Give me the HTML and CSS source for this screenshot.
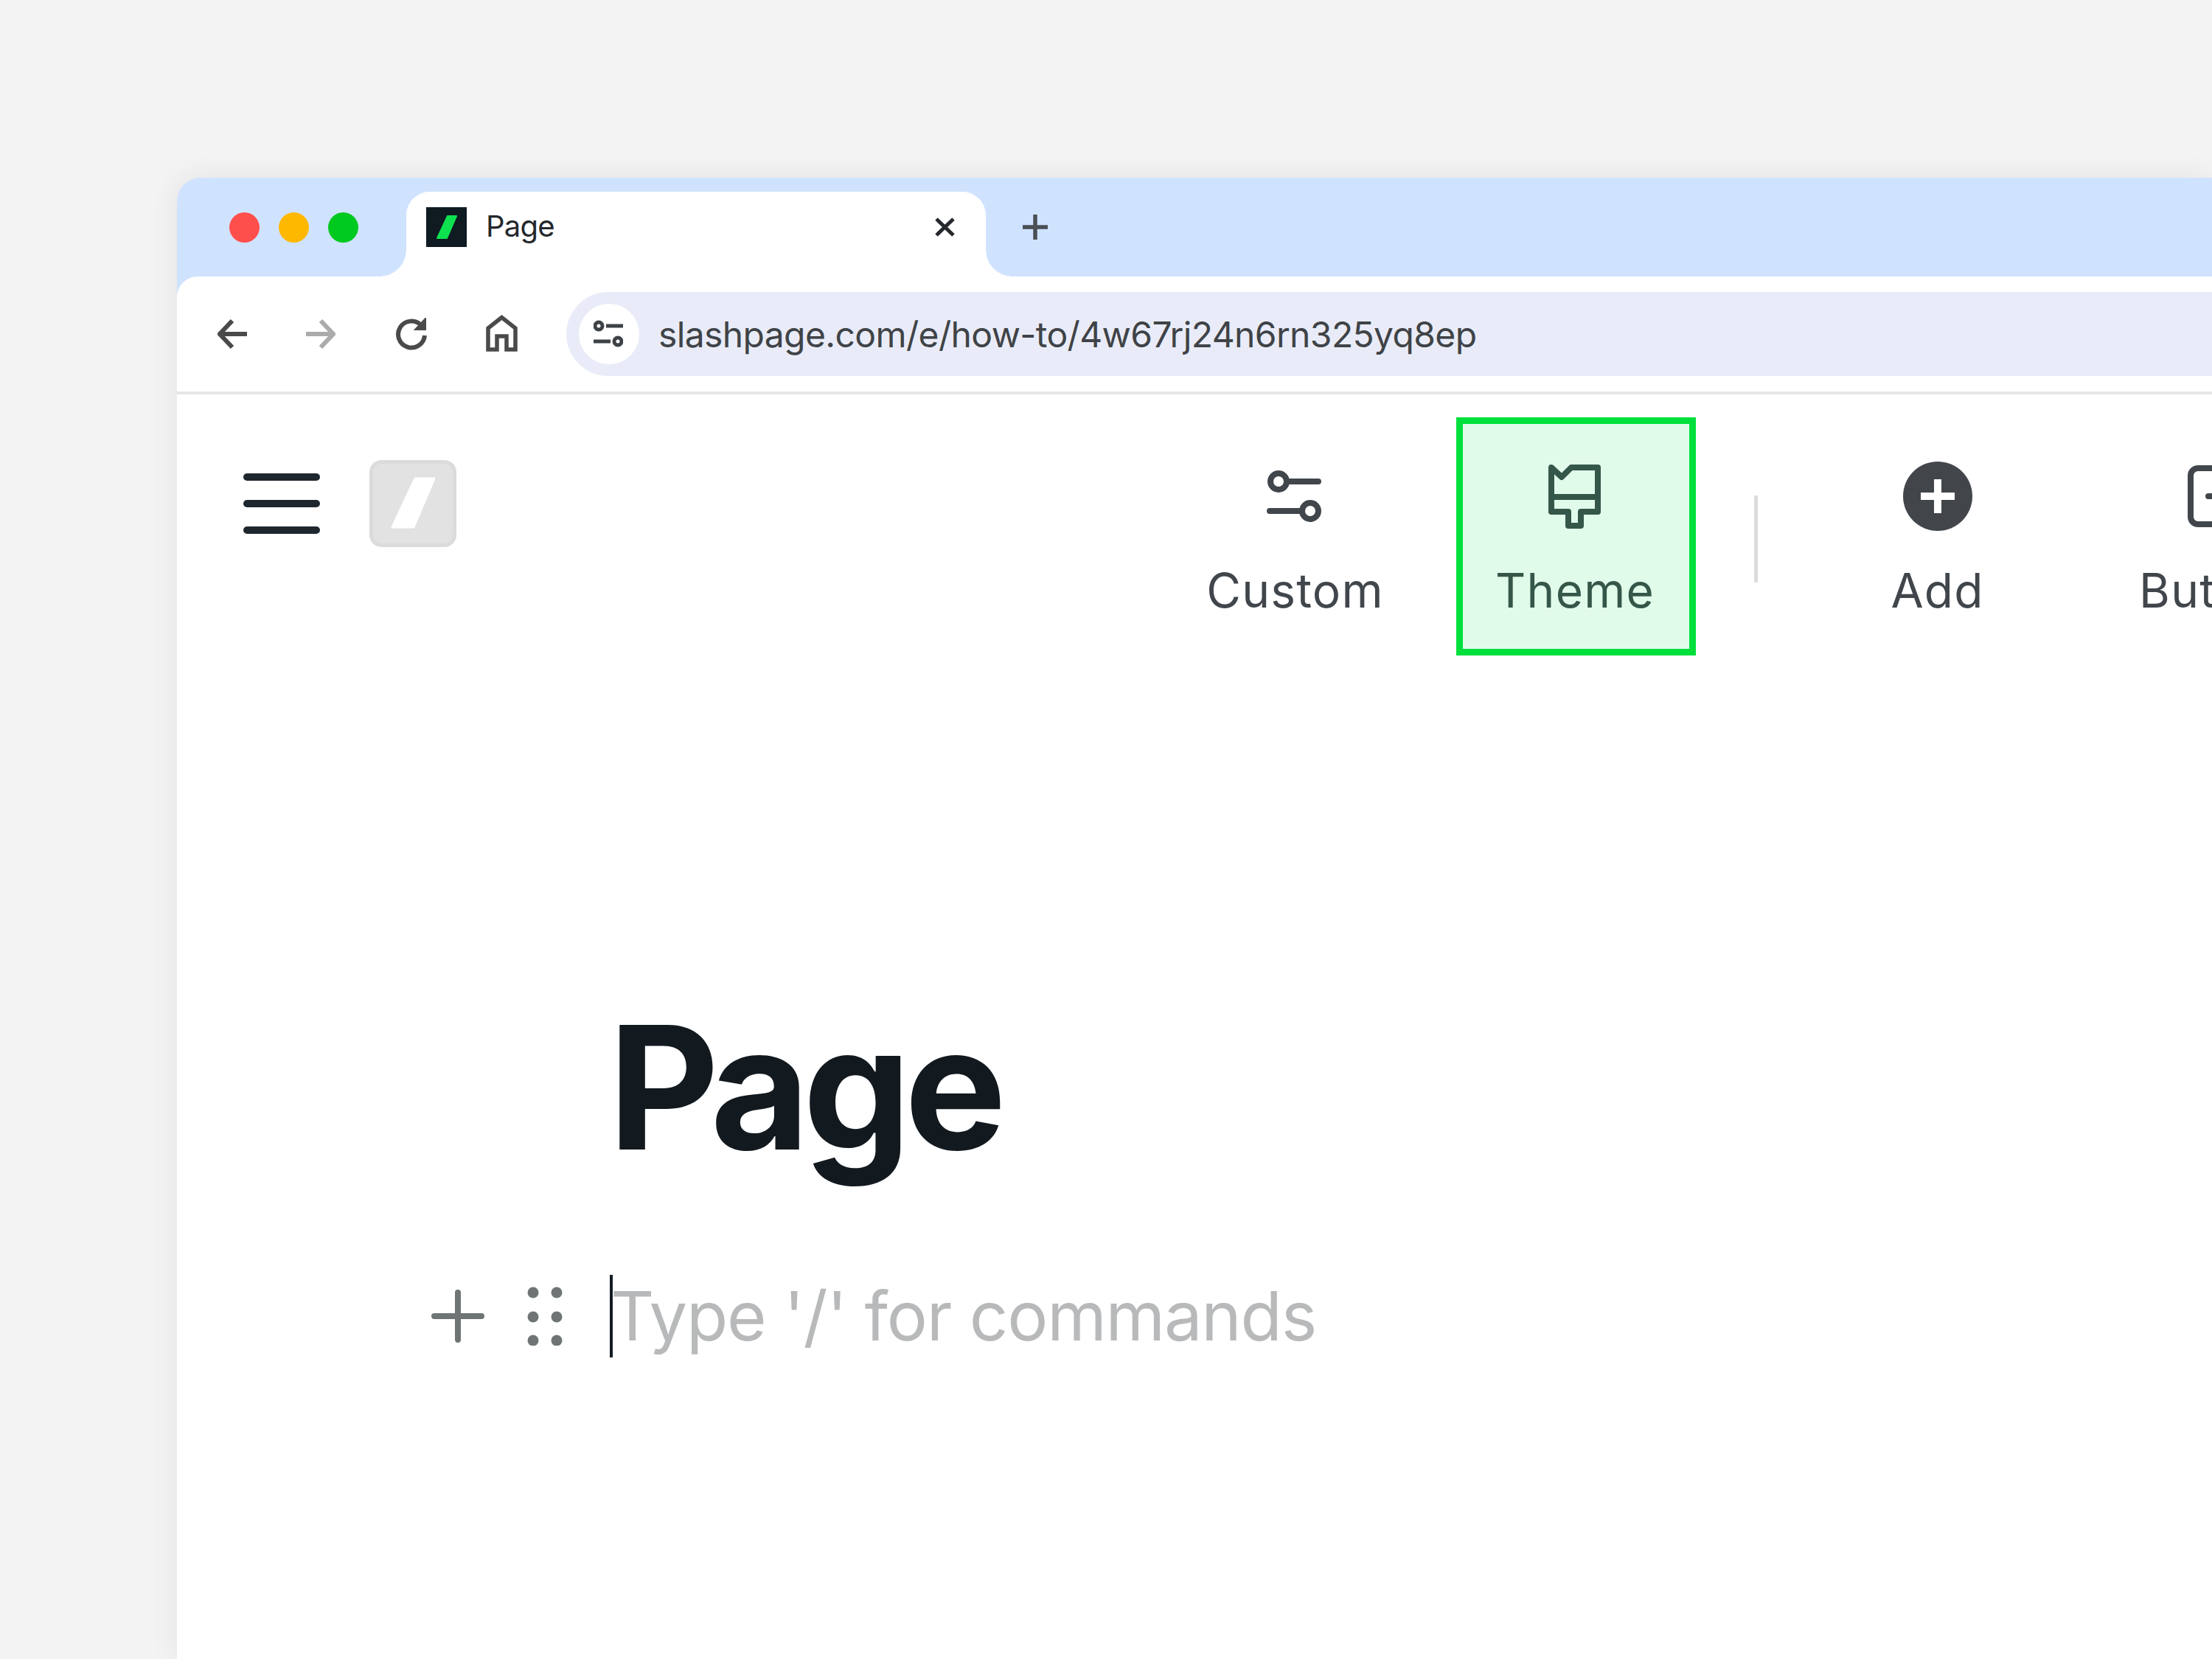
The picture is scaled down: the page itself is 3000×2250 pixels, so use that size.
FILE: index.html
```html
<!DOCTYPE html>
<html lang="en">
<head>
<meta charset="utf-8">
<title>Page</title>
<link rel="stylesheet" href="styles.css">
</head>
<body>
<div class="window">
  <div class="tabstrip">
    <div class="lights"><span class="light red"></span><span class="light amber"></span><span class="light green"></span></div>
    <div class="tab">
      <svg class="favicon" viewBox="0 0 55 54"><rect width="55" height="54" fill="#0f1a21"/><path d="M29 12H41L28 42H15Z" fill="#0ee14f" stroke="#0ee14f" stroke-width="2" stroke-linejoin="round"/></svg>
      <span class="tab-title">Page</span>
      <svg class="tab-close" viewBox="0 0 27 26"><path d="M2 2L25 24M25 2L2 24" fill="none" stroke="#24282c" stroke-width="5"/></svg>
    </div>
    <svg class="new-tab" viewBox="0 0 34 34"><path d="M17 0V34M0 17H34" fill="none" stroke="#4a4f55" stroke-width="5.500"/></svg>
  </div>
  <div class="toolbar">
    <div class="nav">
      <svg class="nav-icon" viewBox="0 0 40 40"><path d="M40 20H5M20 2L3 20L20 38" fill="none" stroke="#4a4a4a" stroke-width="6"/></svg>
      <svg class="nav-icon" viewBox="0 0 40 40"><path d="M0 20H35M20 2L37 20L20 38" fill="none" stroke="#ababab" stroke-width="6"/></svg>
      <svg class="nav-icon wide" viewBox="0 0 44 44"><path d="M36 10A18 18 0 1 0 41 24" fill="none" stroke="#4a4a4a" stroke-width="6"/><path d="M42 1V16H28Z" fill="#4a4a4a" stroke="#4a4a4a" stroke-width="2"/></svg>
      <svg class="nav-icon home" viewBox="0 0 44 50"><path d="M21.500 3.500L3 18V47H15V29H28V47H40V18Z" fill="none" stroke="#4a4a4a" stroke-width="5.500"/></svg>
    </div>
    <div class="address">
      <span class="site-info"><svg class="site-icon" viewBox="0 0 40 38"><g fill="none" stroke="#3d4246" stroke-width="5"><circle cx="7" cy="8" r="5"/><path d="M17 8H40M0 29H23"/><circle cx="33" cy="29" r="5"/></g></svg></span>
      <span class="url">slashpage.com/e/how-to/4w67rj24n6rn325yq8ep</span>
    </div>
  </div>
  <div class="app">
    <div class="app-header">
      <div class="brand">
        <div class="burger"><span></span><span></span><span></span></div>
        <svg class="logo" viewBox="0 0 118 118"><rect x="2.500" y="2.500" width="113" height="113" rx="14" fill="#e2e2e2" stroke="#dbdbdb" stroke-width="5"/><path d="M62 25H88L60 91H31Z" fill="#fff" stroke="#fff" stroke-width="3" stroke-linejoin="round"/></svg>
      </div>
      <div class="tools">
        <div class="tool">
          <span class="tool-icon"><svg class="ic-custom" viewBox="0 0 74 70"><g fill="none" stroke="#40464b" stroke-width="8" stroke-linecap="round"><circle cx="16" cy="15" r="11"/><path d="M31 15H70M4 55H44"/><circle cx="59" cy="55" r="11"/></g></svg></span>
          <span class="tool-label">Custom</span>
        </div>
        <div class="tool active">
          <span class="tool-icon"><svg class="ic-brush" viewBox="0 0 71 87"><path d="M4 4L18 17L31 4H67V64H44V83H27V64H4ZM4 44H67" fill="none" stroke="#34574a" stroke-width="8" stroke-linejoin="round"/></svg></span>
          <span class="tool-label">Theme</span>
        </div>
        <span class="divider"></span>
        <div class="tool">
          <span class="tool-icon"><svg class="ic-add" viewBox="0 0 94 94"><circle cx="47" cy="47" r="47" fill="#42464b"/><path d="M47 24V70M24 47H70" fill="none" stroke="#fff" stroke-width="10"/></svg></span>
          <span class="tool-label">Add</span>
        </div>
        <div class="tool">
          <span class="tool-icon"><svg class="ic-button" viewBox="0 0 84 84"><rect x="4" y="4" width="76" height="76" rx="10" fill="none" stroke="#40464b" stroke-width="8"/><path d="M28 42H56M42 28V56" fill="none" stroke="#40464b" stroke-width="8" stroke-linecap="round"/></svg></span>
          <span class="tool-label label-button">Button</span>
        </div>
      </div>
    </div>
    <h1 class="page-title">Page</h1>
    <div class="editor-row">
      <svg class="ed-plus" viewBox="0 0 72 72"><path d="M36 4V68M4 36H68" fill="none" stroke="#6f7575" stroke-width="8" stroke-linecap="round"/></svg>
      <svg class="ed-grip" viewBox="0 0 48 80"><g fill="#6f7575"><circle cx="8" cy="8" r="7.500"/><circle cx="40" cy="8" r="7.500"/><circle cx="8" cy="41" r="7.500"/><circle cx="40" cy="41" r="7.500"/><circle cx="8" cy="73" r="7.500"/><circle cx="40" cy="73" r="7.500"/></g></svg>
      <span class="caret"></span>
      <span class="placeholder">Type '/' for commands</span>
    </div>
  </div>
</div>
</body>
</html>
```

FILE: styles.css
```css
* { box-sizing: border-box; }
html, body { margin: 0; height: 2250px; overflow: hidden; }
body {
  background: #f3f3f3;
  padding: 241px 0 0 240px;
  font-family: Inter, "Liberation Sans", sans-serif;
}
.window {
  width: 2760px;
  height: 2009px;
  background: #d0e3fe;
  border-top-left-radius: 32px;
  box-shadow: 0 0 40px rgba(0, 0, 0, .07);
  display: flex;
  flex-direction: column;
  overflow: hidden;
}
.tabstrip {
  height: 134px;
  padding: 19px 0 0 71px;
  display: flex;
  flex-shrink: 0;
}
.lights {
  display: flex;
  align-items: center;
  gap: 26px;
  height: 97px;
}
.light { width: 41px; height: 41px; border-radius: 50%; }
.red { background: #ff4f4d; }
.amber { background: #ffb800; }
.green { background: #00c91f; }
.tab {
  position: relative;
  margin-left: 65px;
  width: 786px;
  height: 115px;
  padding: 0 42px 19px 27px;
  background: #fff;
  border-radius: 32px 32px 0 0;
  display: flex;
  align-items: center;
}
.tab::before, .tab::after {
  content: "";
  position: absolute;
  bottom: 0;
  width: 36px;
  height: 36px;
}
.tab::before {
  left: -36px;
  background: radial-gradient(circle at 0 0, transparent 35.5px, #fff 36px);
}
.tab::after {
  right: -36px;
  background: radial-gradient(circle at 100% 0, transparent 35.5px, #fff 36px);
}
.favicon { width: 55px; height: 54px; flex-shrink: 0; }
.tab-title { margin: -3px 0 0 26px; font-size: 40px; letter-spacing: -0.8px; color: #24282c; }
.tab-close { width: 27px; height: 26px; margin-left: auto; }
.new-tab { width: 34px; height: 34px; margin: 31px 0 0 50px; }

.toolbar {
  height: 160px;
  flex-shrink: 0;
  background: #fff;
  border-top-left-radius: 28px;
  border-bottom: 4px solid #e6e6e6;
  padding: 21px 0 0 55px;
  display: flex;
  align-items: flex-start;
}
.nav {
  display: flex;
  align-items: center;
  gap: 80px;
  height: 114px;
}
.nav-icon { width: 40px; height: 40px; display: block; }
.nav-icon.wide { width: 44px; height: 44px; }
.nav-icon.home { width: 44px; height: 50px; margin-top: -2px; }
.address {
  flex: 1;
  height: 114px;
  margin-left: 65px;
  padding-left: 17px;
  background: #e9ecf8;
  border-radius: 57px 0 0 57px;
  display: flex;
  align-items: center;
}
.site-info {
  width: 82px;
  height: 82px;
  background: #fff;
  border-radius: 50%;
  display: flex;
  align-items: center;
  justify-content: center;
}
.site-icon { width: 40px; height: 38px; margin-left: -2px; }
.url { margin-left: 26px; font-size: 48px; letter-spacing: -0.62px; color: #3f4347; white-space: nowrap; }

.app { flex: 1; background: #fff; min-height: 0; }
.app-header { display: flex; padding: 31px 0 0 90px; align-items: flex-start; }
.brand { display: flex; align-items: center; gap: 67px; margin-top: 58px; flex-shrink: 0; }
.burger { width: 104px; display: flex; flex-direction: column; gap: 26px; }
.burger span { display: block; height: 10px; border-radius: 5px; background: #1f272e; }
.logo { width: 118px; height: 118px; display: block; }
.tools { display: flex; margin-left: 975px; gap: 56px; flex-shrink: 0; }
.tool {
  width: 325px;
  height: 323px;
  padding-top: 59px;
  display: flex;
  flex-direction: column;
  align-items: center;
  color: #40464b;
  flex-shrink: 0;
}
.tool.active {
  background: #e1fbeb;
  border: 9px solid #00e03c;
  padding: 50px 3px 0 0;
  color: #34574a;
}
.tool-icon { height: 96px; display: flex; align-items: center; justify-content: center; }
.tool-label { font-size: 64px; line-height: 80px; margin-top: 40px; letter-spacing: 1.2px; }
.label-button { margin-right: 12px; }
.ic-custom { width: 74px; height: 70px; margin-right: 3px; }
.ic-brush { width: 71px; height: 87px; margin-right: 2px; }
.ic-add { width: 94px; height: 94px; }
.ic-button { width: 84px; height: 84px; }
.divider {
  width: 5px;
  height: 118px;
  background: #dcdcdc;
  margin: 106px 25px 0 23px;
  flex-shrink: 0;
}
.page-title {
  margin: 0;
  padding: 441px 0 0 585px;
  font-size: 232px;
  font-weight: 650;
  letter-spacing: -9px;
  line-height: 290px;
  color: #12191f;
}
.editor-row {
  display: flex;
  align-items: center;
  padding: 109px 0 0 345px;
}
.ed-plus { width: 72px; height: 72px; }
.ed-grip { width: 48px; height: 80px; margin-left: 58px; }
.caret { width: 4px; height: 112px; background: #141c24; margin-left: 64px; }
.placeholder { margin-left: -3px; font-size: 92px; letter-spacing: -1.2px; line-height: 112px; color: #b8b9ba; }
```
